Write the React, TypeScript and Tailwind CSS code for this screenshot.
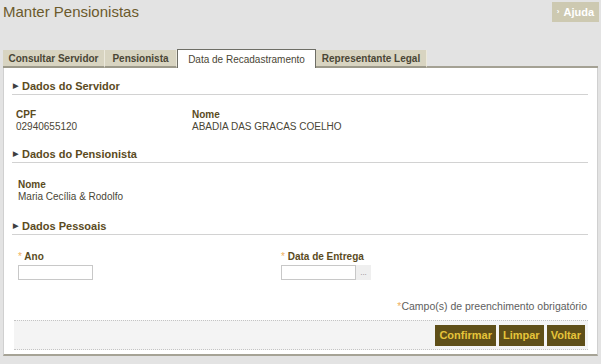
import React from 'react';

const SectionHeader = ({ title }: { title: string }) => (
    <div className="flex items-center gap-[4px] border-b border-[#d2d2d2] pb-[1px] text-[11px] leading-[14px] font-bold text-[#5b4b1e]">
        <span className="text-[7px] text-[#3f3f3f] pl-[1px]">▶</span>
        {title}
    </div>
);

const Field = ({ label, value }: { label: string; value: string }) => (
    <div className="flex flex-col text-[10px] leading-[12px]">
        <span className="font-bold text-[#5b4b1e]">{label}</span>
        <span className="text-[#4a4636]">{value}</span>
    </div>
);

const tabs = [
    { label: 'Consultar Servidor', width: 'w-[102px]' },
    { label: 'Pensionista', width: 'w-[72px]' },
    { label: 'Data de Recadastramento', width: 'w-[139px]', active: true },
    { label: 'Representante Legal', width: 'w-[111px]' },
];

const App = () => {
    return (
        <div
            className="w-[601px] h-[364px] bg-[#e3e3e3] overflow-hidden"
            style={{ fontFamily: '"Liberation Sans", Arial, sans-serif' }}
        >
            <div className="flex justify-between items-start pl-[3px] pr-[2px] pt-[2px] h-[49px]">
                <h1 className="text-[15px] leading-[18px] text-[#6b5a2c] mt-[1px]">
                    Manter Pensionistas
                </h1>
                <button
                    type="button"
                    className="flex items-center gap-[4px] h-[20px] px-[5px] bg-[#cdc9b1] text-white text-[11px] font-bold"
                >
                    <span className="text-[8px]">›</span>
                    Ajuda
                </button>
            </div>

            <div className="flex items-end pl-[3px] pr-[3px] h-[19px]">
                {tabs.map((tab) => (
                    <div
                        key={tab.label}
                        className={
                            tab.active
                                ? `${tab.width} h-[19px] flex items-center justify-center bg-white border-x border-t border-[#6e6e66] text-[10px] text-[#4a4636]`
                                : `${tab.width} h-[18px] flex items-center justify-center bg-[#d8d4c1] border-r border-[#ece9dc] border-b-2 border-b-[#9c998a] text-[10px] font-bold text-[#4a4636]`
                        }
                    >
                        {tab.label}
                    </div>
                ))}
                <div className="flex-1 h-[18px] border-b-2 border-[#a4a194]" />
            </div>

            <div className="mx-[3px] h-[288px] bg-white border-l border-r border-[#d0d0d0] border-b-2 border-b-[#a6a396] pl-[8px] pr-[9px] pt-[11px] flex flex-col">
                <SectionHeader title="Dados do Servidor" />
                <div className="flex pl-[4px] mt-[14px]">
                    <div className="w-[176px]">
                        <Field label="CPF" value="02940655120" />
                    </div>
                    <Field label="Nome" value="ABADIA DAS GRACAS COELHO" />
                </div>

                <div className="mt-[14px]">
                    <SectionHeader title="Dados do Pensionista" />
                </div>
                <div className="pl-[6px] mt-[16px]">
                    <Field label="Nome" value="Maria Cecília & Rodolfo" />
                </div>

                <div className="mt-[16px]">
                    <SectionHeader title="Dados Pessoais" />
                </div>
                <div className="flex pl-[6px] mt-[16px]">
                    <div className="w-[263px] flex flex-col gap-[2px]">
                        <span className="text-[10px] font-bold text-[#5b4b1e] leading-[12px]">
                            <span className="text-[#f0b060] font-normal">*</span> Ano
                        </span>
                        <input className="w-[75px] h-[15px] border border-[#c8c8c8] bg-white" />
                    </div>
                    <div className="flex flex-col gap-[2px]">
                        <span className="text-[10px] font-bold text-[#5b4b1e] leading-[12px]">
                            <span className="text-[#f0b060] font-normal">*</span> Data de Entrega
                        </span>
                        <div className="flex items-center">
                            <input className="w-[75px] h-[15px] border border-[#c8c8c8] bg-white" />
                            <span className="w-[15px] h-[15px] bg-[#efefef] text-[8px] text-[#888] leading-[15px] text-center">
                                ...
                            </span>
                        </div>
                    </div>
                </div>

                <div className="mt-[20px] text-right text-[10.5px] leading-[12px] text-[#5e5e5e] pr-[1px]">
                    <span className="text-[#f0b060]">*</span>Campo(s) de preenchimento obrigatório
                </div>

                <div className="mt-[8px] ml-[2px] h-[30px] flex items-center justify-end gap-[3px] pr-[3px] bg-[#f4f4f4] border-y border-dotted border-[#c4c4c4]">
                    <button type="button" className="h-[21px] px-[4px] bg-[#5f4f18] text-[#e6c43a] text-[11px] font-bold">
                        Confirmar
                    </button>
                    <button type="button" className="h-[21px] px-[4px] bg-[#5f4f18] text-[#e6c43a] text-[11px] font-bold">
                        Limpar
                    </button>
                    <button type="button" className="h-[21px] px-[4px] bg-[#5f4f18] text-[#e6c43a] text-[11px] font-bold">
                        Voltar
                    </button>
                </div>
            </div>
        </div>
    );
};

export default App;
